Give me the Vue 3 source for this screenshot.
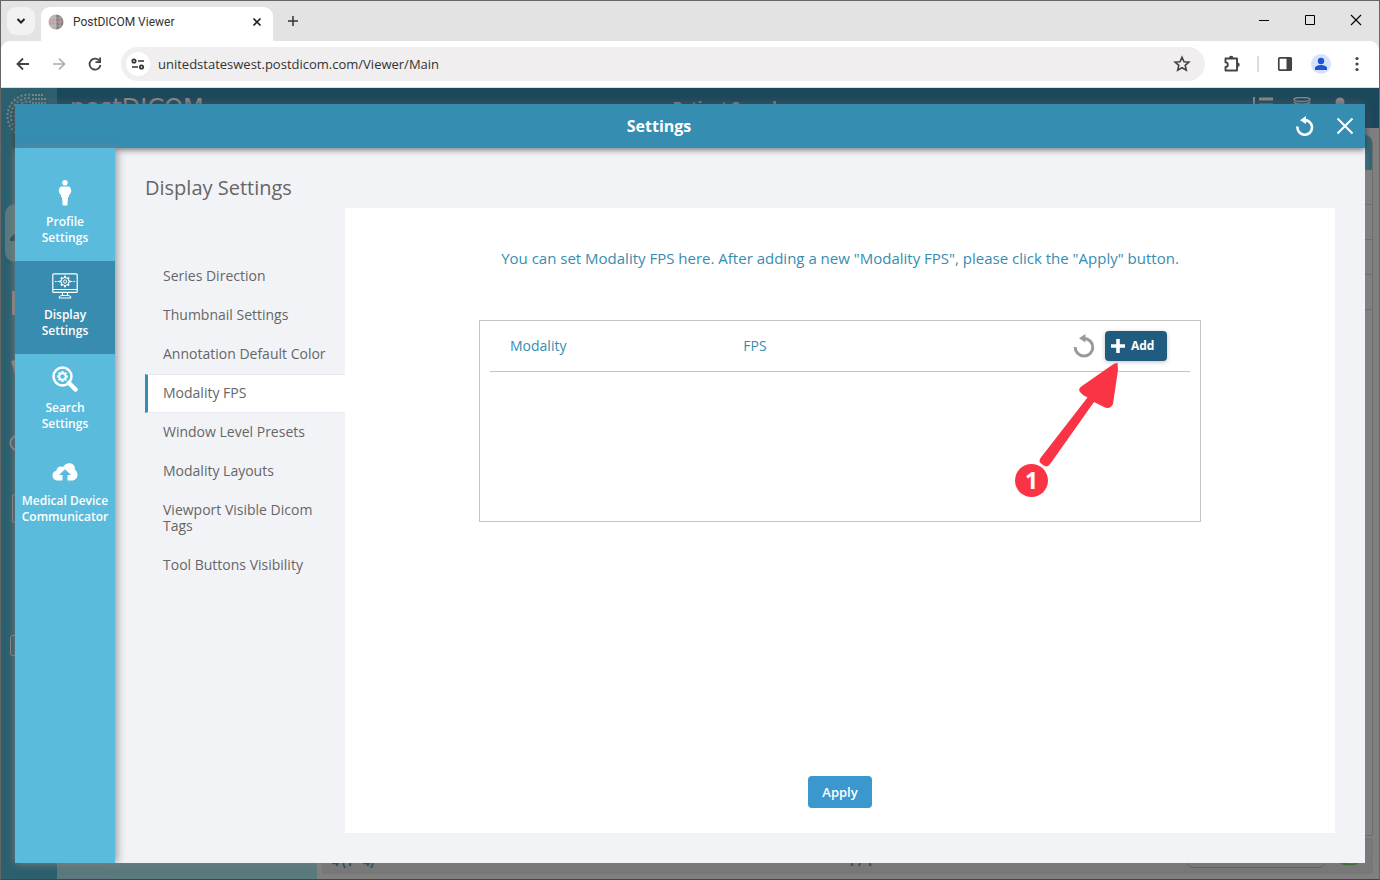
<script setup>
import { ref } from 'vue'

const url = ref('unitedstateswest.postdicom.com/Viewer/Main')
const activeSection = ref('display')
const activeOption = ref('Modality FPS')

const sections = [
  { id: 'profile', label: ['Profile', 'Settings'] },
  { id: 'display', label: ['Display', 'Settings'] },
  { id: 'search', label: ['Search', 'Settings'] },
  { id: 'device', label: ['Medical Device', 'Communicator'] },
]

const options = [
  'Series Direction',
  'Thumbnail Settings',
  'Annotation Default Color',
  'Modality FPS',
  'Window Level Presets',
  'Modality Layouts',
  'Viewport Visible Dicom Tags',
  'Tool Buttons Visibility',
]

const teeth = [0, 45, 90, 135, 180, 225, 270, 315]
</script>

<template>
  <div class="window">
    <header class="tabstrip">
      <button class="tab-search" aria-label="Search tabs">
        <svg width="10" height="8" viewBox="0 0 10 8"><path d="M1.5 2l3.5 3.5L8.5 2" fill="none" stroke="#222" stroke-width="2" /></svg>
      </button>
      <div class="tab">
        <svg width="16" height="16" viewBox="0 0 16 16">
          <defs><clipPath id="fav"><circle cx="8" cy="8" r="7.5" /></clipPath></defs>
          <g clip-path="url(#fav)">
            <rect width="8" height="16" fill="#b5b0b0" /><rect x="8" width="8" height="16" fill="#858080" />
            <path d="M0 4h16M0 8h16M0 12h16M4 0v16M8 0v16M12 0v16" stroke="#c9c4c4" stroke-width=".5" />
            <path d="M2 6h5M1 9h6M10 7h4M12 5v5" stroke="#d98585" stroke-width=".8" />
          </g>
        </svg>
        <span class="tab-title">PostDICOM Viewer</span>
        <button class="plain tab-close" aria-label="Close tab">
          <svg width="10" height="10" viewBox="0 0 10 10"><path d="M1.5 1.5l7 7m0-7l-7 7" stroke="#222" stroke-width="1.7" /></svg>
        </button>
      </div>
      <button class="plain new-tab" aria-label="New tab">
        <svg width="12" height="12" viewBox="0 0 12 12"><path d="M6 1v10M1 6h10" stroke="#333" stroke-width="1.5" /></svg>
      </button>
      <div class="win-buttons">
        <button class="plain" aria-label="Minimize"><svg width="12" height="12" viewBox="0 0 12 12"><path d="M1 6.5h10" stroke="#000" /></svg></button>
        <button class="plain" aria-label="Maximize"><svg width="12" height="12" viewBox="0 0 12 12"><path d="M1.5 1.5h9v9h-9z" fill="none" stroke="#000" /></svg></button>
        <button class="plain" aria-label="Close"><svg width="12" height="12" viewBox="0 0 12 12"><path d="M1 1l10 10M11 1L1 11" stroke="#000" stroke-width="1.1" /></svg></button>
      </div>
    </header>

    <div class="toolbar">
      <button class="plain nav-btn" aria-label="Back"><svg width="16" height="16" viewBox="0 0 16 16"><path d="M14 8H3M8 2.5L2.5 8 8 13.500" fill="none" stroke="#444" stroke-width="1.8" /></svg></button>
      <button class="plain nav-btn" aria-label="Forward"><svg width="16" height="16" viewBox="0 0 16 16"><path d="M2 8h11M8 2.500L13.500 8 8 13.500" fill="none" stroke="#aaa" stroke-width="1.6" /></svg></button>
      <button class="plain nav-btn" aria-label="Reload"><svg width="16" height="16" viewBox="0 0 16 16"><path d="M12.600 5A5.500 5.500 0 1 0 13.500 9" fill="none" stroke="#444" stroke-width="1.8" /><path d="M14 1.500v5.500H8.500V5.300h3.700V1.500z" fill="#444" /></svg></button>
      <div class="omnibox">
        <button class="plain site-info" aria-label="Site information">
          <svg width="14" height="12" viewBox="0 0 14 12"><g fill="none" stroke="#333" stroke-width="1.7"><circle cx="3" cy="3" r="1.700" /><path d="M7 3h6M1 9h6" /><circle cx="10.500" cy="9" r="1.700" /></g></svg>
        </button>
        <input v-model="url" class="url" type="text" aria-label="Address" />
        <button class="plain star" aria-label="Bookmark"><svg width="18" height="18" viewBox="0 0 18 18"><path d="M9 2.300l2 4.500 4.900.4-3.700 3.200 1.100 4.800L9 12.700l-4.300 2.500 1.100-4.800L2.100 7.200 7 6.800z" fill="none" stroke="#444" stroke-width="1.600" /></svg></button>
      </div>
      <button class="plain tool" aria-label="Extensions"><svg width="18" height="18" viewBox="0 0 18 18"><path d="M2.500 3.500H14v12H2.500V12a2.300 2.300 0 0 0 0-4.600z" fill="none" stroke="#444" stroke-width="1.900" stroke-linejoin="round" /><path d="M6 3a2.200 2.200 0 0 1 4.400 0zM14.500 7.500a2.200 2.200 0 0 1 0 4.400z" fill="#444" /></svg></button>
      <span class="divider"></span>
      <button class="plain tool" aria-label="Side panel"><svg width="16" height="16" viewBox="0 0 16 16"><rect x="1.800" y="1.800" width="12.400" height="12.400" rx="1" fill="none" stroke="#444" stroke-width="1.700" /><path d="M9.500 1.500h5v13h-5z" fill="#444" /></svg></button>
      <button class="plain tool" aria-label="Profile"><svg width="20" height="20" viewBox="0 0 20 20"><circle cx="10" cy="10" r="10" fill="#d5e2fc" /><circle cx="10" cy="7" r="3.200" fill="#1f54d0" /><path d="M4 16v-2c0-2 3.500-3 6-3s6 1 6 3v2z" fill="#1f54d0" /></svg></button>
      <button class="plain tool" aria-label="Menu"><svg width="4" height="16" viewBox="0 0 4 16"><g fill="#444"><circle cx="2" cy="2.500" r="1.600" /><circle cx="2" cy="8" r="1.600" /><circle cx="2" cy="13.500" r="1.600" /></g></svg></button>
    </div>

    <div class="viewport">
      <div class="app">
        <div class="rail">
          <svg class="rail-logo" width="48" height="48" viewBox="0 0 48 48">
            <g fill="none" stroke="#7b8588" stroke-width="2" stroke-dasharray="2 2">
              <circle cx="24" cy="24" r="21.500" />
              <circle cx="24" cy="24" r="18" stroke-dashoffset="1" />
              <circle cx="24" cy="24" r="14.500" />
            </g>
            <path d="M26 0h22v26H26z" fill="#2c606e" />
            <path d="M27 3h12M27 7h15M27 11h15" stroke="#7b8588" stroke-width="2" stroke-dasharray="2 1" />
          </svg>
          <div class="rail-item on"><svg width="46" height="30" viewBox="0 0 46 30"><path d="M4 23c0-5 3-6 9-9h20v9z" fill="#1c485b" /></svg></div>
          <div class="rail-item"><svg width="46" height="30" viewBox="0 0 46 30"><path d="M6 4h34v24H6z" fill="#8b8584" /></svg></div>
          <div class="rail-item"><svg width="46" height="30" viewBox="0 0 46 30"><path d="M5 5l34-8v28H11z" fill="#8b8584" /></svg></div>
          <div class="rail-item"><svg width="46" height="30" viewBox="0 0 46 30"><circle cx="12" cy="18" r="7.500" fill="none" stroke="#8b8584" stroke-width="2" /></svg></div>
          <div class="rail-item"><svg width="46" height="30" viewBox="0 0 46 30"><path d="M6.500 1h30v27h-30z" fill="none" stroke="#8b8584" /></svg></div>
          <div class="rail-item"><svg width="46" height="30" viewBox="0 0 46 30"><path d="M9 18h10v5H9z" fill="#8b8584" /></svg></div>
          <div class="rail-item"><svg width="46" height="30" viewBox="0 0 46 30"><rect x="4.500" y="3.500" width="30" height="20" rx="2" fill="none" stroke="#8b8584" /></svg></div>
        </div>
        <div class="app-main">
          <div class="app-header">
            <span class="app-brand">postDICOM</span>
            <span class="app-title">Patient Search</span>
            <span class="app-icons">
              <svg width="20" height="20" viewBox="0 0 20 20"><path d="M1 0v20" stroke="#8b8584" stroke-width="2" /><path d="M6 2h14M6 8h14M6 14h14" stroke="#8b8584" stroke-width="3" /></svg>
              <svg width="18" height="20" viewBox="0 0 18 20"><g fill="none" stroke="#8b8584" stroke-width="1.500"><ellipse cx="9" cy="2.500" rx="8" ry="2" /><path d="M1 5c2 3 14 3 16 0M1 10c2 3 14 3 16 0" /></g></svg>
              <svg width="18" height="20" viewBox="0 0 18 20"><circle cx="9" cy="5" r="4.500" fill="#8b8584" /></svg>
            </span>
          </div>
          <div class="app-body">
            <div class="app-filter"></div>
            <div class="app-results">
              <div class="app-grid">
                <div class="app-grid-head"></div>
                <div v-for="n in 4" :key="n" class="app-grid-row"></div>
              </div>
              <div class="app-footer">
                <span class="app-count">4 (1 - 4)</span>
                <span class="app-page">1 / 1</span>
                <span class="app-picker"></span>
                <svg width="20" height="8" viewBox="0 0 20 8"><path d="M0 2q4-3 8 0t12 0q-2 4-9 3Q3 6 0 2z" fill="#2c6a24" /></svg>
              </div>
            </div>
          </div>
        </div>
      </div>

      <section class="modal" role="dialog" aria-labelledby="modal-title">
        <header class="modal-head">
          <h1 id="modal-title">Settings</h1>
          <div class="modal-tools">
            <button class="plain" aria-label="Reset"><svg width="20" height="20" viewBox="0 0 20 20"><path d="M9 4.200A7.300 7.300 0 1 1 2.500 10.500" fill="none" stroke="#fff" stroke-width="2.600" /><path d="M11 0v8L5 4.200z" fill="#fff" /></svg></button>
            <button class="plain" aria-label="Close settings"><svg width="20" height="20" viewBox="0 0 20 20"><path d="M2.500 2.500l15 15m0-15l-15 15" stroke="#fff" stroke-width="2" /></svg></button>
          </div>
        </header>

        <div class="modal-body">
          <nav class="sections" aria-label="Settings sections">
            <button
              v-for="s in sections"
              :key="s.id"
              class="section"
              :class="{ active: s.id === activeSection }"
              @click="activeSection = s.id"
            >
              <svg width="26" height="26" viewBox="0 0 26 26">
                <g v-if="s.id === 'profile'" fill="#fff">
                  <circle cx="13" cy="2.800" r="2.700" />
                  <path d="M9.500 6.500h7q1.800 0 2.200 2l.6 2.500-1.500 4-.8-1v3h-1l-.6 8.500h-4.800L10 17H9v-3l-.8 1-1.500-4 .6-2.500q.4-2 2.200-2z" />
                </g>
                <g v-else-if="s.id === 'display'" fill="none" stroke="#fff">
                  <rect x=".8" y=".8" width="24.400" height="18.600" rx="1" stroke-width="1.200" />
                  <path d="M1 16.500h24M10.500 19.500v3m5-3v3M7 25q0-2.500 3-2.500h6q3 0 3 2.500z" />
                  <circle cx="13" cy="8.500" r="1.600" />
                  <circle cx="13" cy="8.500" r="4" />
                  <path v-for="t in teeth" :key="t" d="M13 4.500V2.800" stroke-width="2" :transform="`rotate(${t} 13 8.500)`" />
                  <path d="M3 8.500h4M19 8.500h4" stroke-dasharray="1.500 1" />
                </g>
                <g v-else-if="s.id === 'search'" fill="none" stroke="#fff">
                  <circle cx="10.500" cy="10.500" r="9" stroke-width="2.500" />
                  <path d="M17 17l6.500 6.500" stroke-width="4.500" stroke-linecap="round" />
                  <circle cx="10.500" cy="10.500" r="3.300" stroke-width="2" />
                  <path v-for="t in teeth" :key="t" d="M10.500 7V5" stroke-width="2" :transform="`rotate(${t} 10.500 10.500)`" />
                </g>
                <path v-else d="M6 21.500C2.500 21.500.5 19.300.5 16.500c0-2.500 1.700-4.400 4-4.800-.2-3 3.500-5.500 6.500-3.700C12.500 5.500 15 4 18 4.300c3.500.4 5.300 3.200 4.800 6.200 1.800 1.300 2.700 3 2.700 5.200 0 3.200-2.200 5.800-5.500 5.800h-4.500V16H19l-6-5.800L7 16h3.500v5.500z" fill="#fff" />
              </svg>
              <span>{{ s.label[0] }}<br />{{ s.label[1] }}</span>
            </button>
          </nav>

          <main class="content">
            <h2>Display Settings</h2>
            <div class="columns">
              <nav class="options" aria-label="Display settings">
                <button
                  v-for="o in options"
                  :key="o"
                  class="option"
                  :class="{ active: o === activeOption }"
                  @click="activeOption = o"
                >{{ o }}</button>
              </nav>
              <div class="panel">
                <p class="hint">You can set Modality FPS here. After adding a new "Modality FPS", please click the "Apply" button.</p>
                <div class="list">
                  <table>
                    <thead>
                      <tr>
                        <th scope="col">Modality</th>
                        <th scope="col">FPS</th>
                        <th class="actions">
                          <div class="action-row">
                            <button class="plain" aria-label="Reset list"><svg width="22" height="26" viewBox="0 0 22 26"><path d="M11 5.500A8.800 8.800 0 1 1 2.200 14" fill="none" stroke="#999" stroke-width="3" /><path d="M12.500 1v8.500L6 5.200z" fill="#999" /></svg></button>
                            <button class="add"><svg width="14" height="14" viewBox="0 0 14 14"><path d="M7 0v14M0 7h14" stroke="#fff" stroke-width="3.600" /></svg>Add</button>
                          </div>
                        </th>
                      </tr>
                    </thead>
                  </table>
                  <svg class="callout" width="120" height="140" viewBox="0 0 120 140">
                    <path d="M107.500 3q-2-.5-5 1.800L72 26q-4.500 3-2 6 3 4 7.500 5.500L30.500 98q-2 3 0 5 2.500 2.500 5.500 3.500 3-.5 4.500-3L84 42l10 5q6 3 9-3l5-34z" fill="#fa3444" />
                    <circle cx="21.500" cy="120.500" r="16.500" fill="#fa3444" />
                    <text x="21.500" y="129" text-anchor="middle" class="callout-text">1</text>
                  </svg>
                </div>
                <button class="apply">Apply</button>
              </div>
            </div>
          </main>
        </div>
      </section>
    </div>
  </div>
</template>

<style>
html, body, #app { height: 100%; }
body { margin: 0; overflow: hidden; }
</style>

<style scoped>
.window, .window * { box-sizing: border-box; }
.window {
  height: 100vh;
  display: flex;
  flex-direction: column;
  border: 1px solid #666;
  border-bottom-color: #454545;
  background: #e3e3e3;
  font-family: "Open Sans", "Noto Sans", sans-serif;
}
button, input { font-family: inherit; }
svg { display: block; flex: none; }
.plain {
  display: flex;
  align-items: center;
  justify-content: center;
  padding: 0;
  border: 0;
  background: none;
}

.tabstrip { display: flex; height: 40px; flex: none; padding: 6px 0 0 6px; }
.tab-search {
  display: grid;
  place-items: center;
  width: 28px;
  height: 28px;
  padding: 0;
  border: 0;
  border-radius: 9px;
  background: #f2f2f2;
}
.tab {
  display: flex;
  align-items: center;
  width: 232px;
  height: 34px;
  margin-left: 6px;
  padding: 0 11px 5px 7px;
  border-radius: 9px 9px 0 0;
  background: #fff;
}
.tab-title { flex: 1; margin-left: 9px; font: 12px/16px Roboto, sans-serif; color: #333; }
.new-tab { width: 40px; height: 28px; }
.win-buttons { display: flex; margin-left: auto; }
.win-buttons .plain { width: 46px; height: 26px; }

.toolbar {
  display: flex;
  align-items: center;
  height: 47px;
  flex: none;
  padding: 0 12px 0 4px;
  border-radius: 9px 9px 0 0;
  border-bottom: 1px solid #ddd;
  background: #fff;
}
.nav-btn { width: 36px; height: 36px; }
.omnibox {
  display: flex;
  align-items: center;
  flex: 1;
  height: 34px;
  margin: 0 18px 0 8px;
  padding: 0 14px 0 5px;
  border-radius: 17px;
  background: #f0eeef;
}
.site-info { width: 24px; height: 24px; border-radius: 12px; background: #fff; }
.url {
  flex: 1;
  margin-left: 8px;
  padding: 0;
  border: 0;
  outline: 0;
  background: none;
  font-size: 13px;
  color: #333;
}
.divider { width: 2px; height: 16px; margin: 0 18px 0 16px; background: #ddd; }
.divider + .tool { margin-right: 18px; }
.tool:last-child { width: 20px; margin-left: 16px; }

.viewport { position: relative; flex: 1; min-height: 0; }
.app { display: flex; height: 100%; background: #808080; overflow: hidden; }
.rail { display: flex; flex-direction: column; gap: 11px; width: 56px; flex: none; background: #2c606e; }
.rail-logo { margin: 4px 4px 53px; }
.rail-item { display: grid; place-items: center; height: 58px; flex: none; margin: 0 4px; border-radius: 10px; }
.rail-item.on { background: #5a7a7d; }
.app-main { display: flex; flex-direction: column; flex: 1; }
.app-header {
  display: grid;
  grid-template-columns: 1fr auto 1fr;
  height: 40px;
  flex: none;
  padding: 6px 30px 0 13px;
  background: #1c485b;
  color: #8b8584;
}
.app-brand { font: 24px/28px "DejaVu Sans", sans-serif; }
.app-title { margin-left: 36px; font-weight: bold; font-size: 15px; line-height: 24px; }
.app-icons { display: flex; justify-content: flex-end; gap: 20px; padding-top: 3px; }
.app-body { display: flex; flex: 1; min-height: 0; }
.app-filter { width: 260px; background: #5a7a7d; }
.app-results { display: flex; flex-direction: column; flex: 1; padding: 6px 6px 5px 5px; }
.app-grid { flex: 1; border: 1px solid #6c6c6c; border-radius: 9px 9px 0 0; overflow: hidden; }
.app-grid-head { height: 35px; background: #2f6676; }
.app-grid-row { height: 35px; border-bottom: 1px solid #6c6c6c; }
.app-footer {
  display: flex;
  align-items: flex-start;
  height: 36px;
  flex: none;
  margin-top: 2px;
  padding: 0 14px 0 10px;
  background: #787878;
  font-size: 12px;
  font-weight: bold;
  line-height: 48px;
  color: #173f55;
}
.app-count { width: 516px; }
.app-page { flex: 1; }
.app-picker { width: 138px; height: 30px; margin-right: 14px; border: 1px solid #3c6c82; border-radius: 6px; }
.app-footer svg { margin-top: 22px; }

.modal {
  position: absolute;
  inset: 16px 14px;
  display: flex;
  flex-direction: column;
  background: #f2f3f7;
  box-shadow: 0 0 8px rgba(128, 128, 128, 0.6);
}
.modal-head {
  position: relative;
  z-index: 1;
  display: grid;
  grid-template-columns: 1fr auto 1fr;
  align-items: center;
  height: 44px;
  flex: none;
  padding: 0 10px 0 72px;
  background: #368db2;
  box-shadow: 0 2px 6px rgba(0, 0, 0, 0.5);
}
.modal-head h1 { grid-column: 2; margin: 0 124px 0 0; font-size: 16px; line-height: 24px; color: #fff; }
.modal-tools { display: flex; justify-content: flex-end; gap: 20px; }
.modal-body { display: flex; flex: 1; min-height: 0; }
.sections {
  position: relative;
  z-index: 1;
  width: 100px;
  flex: none;
  padding-top: 20px;
  background: #5bbbdc;
  box-shadow: 2px 0 8px rgba(128, 128, 128, 0.8);
}
.section {
  display: flex;
  flex-direction: column;
  align-items: center;
  gap: 8px;
  width: 100%;
  height: 93px;
  padding: 12px 0 15px;
  border: 0;
  background: none;
  color: #fff;
  font-size: 12px;
  font-weight: 600;
  line-height: 16px;
  white-space: nowrap;
}
.section.active { background: #388cb0; }
.content { display: flex; flex-direction: column; flex: 1; padding: 24px 30px 30px; }
.content h2 { margin: 0 0 4px; font-size: 20px; font-weight: 400; line-height: 32px; color: #666; }
.columns { display: flex; flex: 1; }
.options { width: 200px; flex: none; padding-top: 49px; }
.option {
  display: block;
  width: 100%;
  padding: 10px 15px 11px;
  border: 1px solid transparent;
  border-width: 1px 0 1px 3px;
  background: none;
  color: #666;
  font-size: 14px;
  line-height: 16px;
  text-align: left;
}
.option.active { border-color: #e6e8f2; border-left-color: #368db2; background: #fff; }
.panel {
  display: flex;
  flex-direction: column;
  align-items: center;
  flex: 1;
  padding: 38px 20px 25px;
  background: #fff;
}
.hint { margin: 0 0 50px; font-size: 15px; line-height: 24px; color: #368db2; }
.list { position: relative; width: 100%; max-width: 722px; min-height: 202px; padding: 0 10px; border: 1px solid #c4c4c4; }
table { width: 100%; border-collapse: collapse; table-layout: fixed; }
th {
  height: 50px;
  padding: 0 0 0 20px;
  border-bottom: 1px solid #c4c4c4;
  font-size: 14px;
  font-weight: 400;
  text-align: left;
  color: #368db2;
}
th.actions { padding: 0 23px 0 0; }
.action-row { display: flex; align-items: center; justify-content: flex-end; gap: 10px; }
.add {
  display: flex;
  align-items: center;
  gap: 6px;
  width: 62px;
  height: 30px;
  padding: 0 6px;
  border: 0;
  border-radius: 4px;
  background: #205c80;
  box-shadow: 0 1px 4px rgba(0, 0, 0, 0.25);
  color: #fff;
  font-size: 12px;
  font-weight: 700;
}
.callout { position: absolute; top: 39px; right: 70px; }
.callout-text { font-size: 23px; font-weight: 700; fill: #fff; }
.apply {
  width: 64px;
  height: 32px;
  margin-top: auto;
  padding: 0;
  border: 0;
  border-radius: 4px;
  background: #3b98ce;
  color: #fff;
  font-size: 13px;
  font-weight: 600;
}
</style>
